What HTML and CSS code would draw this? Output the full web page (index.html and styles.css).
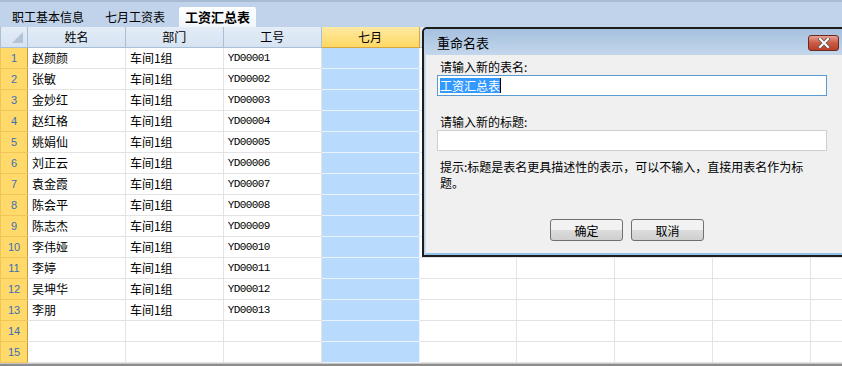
FILE: index.html
```html
<!DOCTYPE html>
<html lang="zh-CN">
<head>
    <meta charset="UTF-8">
    <title>工资汇总表</title>
    <link rel="stylesheet" href="styles.css">
</head>
<body>

<div class="tabbar">
    <span class="tab">职工基本信息</span>
    <span class="tab">七月工资表</span>
    <span class="tab active">工资汇总表</span>
</div>

<table class="sheet">
    <tr class="head">
        <th class="corner"><span class="tri"></span></th>
        <th>姓名</th><th>部门</th><th>工号</th><th class="sel-head">七月</th>
        <th></th><th></th><th></th><th></th><th></th>
    </tr>
    <tr><th>1</th><td>赵颜颜</td><td>车间1组</td><td class="id">YD00001</td><td class="sel"></td><td></td><td></td><td></td><td></td><td></td></tr>
    <tr><th>2</th><td>张敏</td><td>车间1组</td><td class="id">YD00002</td><td class="sel"></td><td></td><td></td><td></td><td></td><td></td></tr>
    <tr><th>3</th><td>金妙红</td><td>车间1组</td><td class="id">YD00003</td><td class="sel"></td><td></td><td></td><td></td><td></td><td></td></tr>
    <tr><th>4</th><td>赵红格</td><td>车间1组</td><td class="id">YD00004</td><td class="sel"></td><td></td><td></td><td></td><td></td><td></td></tr>
    <tr><th>5</th><td>姚娟仙</td><td>车间1组</td><td class="id">YD00005</td><td class="sel"></td><td></td><td></td><td></td><td></td><td></td></tr>
    <tr><th>6</th><td>刘正云</td><td>车间1组</td><td class="id">YD00006</td><td class="sel"></td><td></td><td></td><td></td><td></td><td></td></tr>
    <tr><th>7</th><td>袁金霞</td><td>车间1组</td><td class="id">YD00007</td><td class="sel"></td><td></td><td></td><td></td><td></td><td></td></tr>
    <tr><th>8</th><td>陈会平</td><td>车间1组</td><td class="id">YD00008</td><td class="sel"></td><td></td><td></td><td></td><td></td><td></td></tr>
    <tr><th>9</th><td>陈志杰</td><td>车间1组</td><td class="id">YD00009</td><td class="sel"></td><td></td><td></td><td></td><td></td><td></td></tr>
    <tr><th>10</th><td>李伟娅</td><td>车间1组</td><td class="id">YD00010</td><td class="sel"></td><td></td><td></td><td></td><td></td><td></td></tr>
    <tr><th>11</th><td>李婷</td><td>车间1组</td><td class="id">YD00011</td><td class="sel"></td><td></td><td></td><td></td><td></td><td></td></tr>
    <tr><th>12</th><td>吴坤华</td><td>车间1组</td><td class="id">YD00012</td><td class="sel"></td><td></td><td></td><td></td><td></td><td></td></tr>
    <tr><th>13</th><td>李朋</td><td>车间1组</td><td class="id">YD00013</td><td class="sel"></td><td></td><td></td><td></td><td></td><td></td></tr>
    <tr><th>14</th><td></td><td></td><td></td><td class="sel"></td><td></td><td></td><td></td><td></td><td></td></tr>
    <tr><th>15</th><td></td><td></td><td></td><td class="sel"></td><td></td><td></td><td></td><td></td><td></td></tr>
</table>

<div class="bottom-line"></div>

<div class="dialog">
    <div class="dialog-title">
        <span>重命名表</span>
        <span class="close-btn">
            <svg width="16" height="10" viewBox="0 0 16 10">
                <path d="M4 1 L12 9 M12 1 L4 9" stroke="#5a5a5a" stroke-width="3.6" stroke-linecap="square"/>
                <path d="M4 1 L12 9 M12 1 L4 9" stroke="#ffffff" stroke-width="2" stroke-linecap="square"/>
            </svg>
        </span>
    </div>
    <div class="dialog-body">
        <label>请输入新的表名:</label>
        <div class="field focus"><span class="picked">工资汇总表</span><span class="caret"></span></div>
        <label class="second">请输入新的标题:</label>
        <div class="field"></div>
        <p class="hint">提示:标题是表名更具描述性的表示，可以不输入，直接用表名作为标题。</p>
        <div class="buttons">
            <button>确定</button>
            <button>取消</button>
        </div>
    </div>
</div>

</body>
</html>
```

FILE: styles.css
```css
* {
    box-sizing: border-box;
    font-family: "Noto Sans CJK SC", "Liberation Sans", sans-serif;
}

body {
    margin: 0;
    width: 842px;
    height: 366px;
    overflow: hidden;
    position: relative;
    background: #ffffff;
    font-size: 12px;
    color: #000;
}

.tabbar {
    height: 27px;
    background: #c1d3ea;
    border-top: 2px solid #a9bbd2;
    display: flex;
    align-items: flex-end;
    padding-left: 5px;
}

.tab {
    height: 20px;
    line-height: 20px;
    padding: 0 7px;
    margin-right: 7px;
    font-size: 12px;
}

.tab.active {
    background: linear-gradient(#ffffff, #f1f5fa);
    font-weight: bold;
    font-size: 13px;
    border-radius: 2px 2px 0 0;
    padding: 0 6px;
}

.sheet {
    border-collapse: collapse;
    table-layout: fixed;
    width: 909px;
}

.sheet th, .sheet td {
    height: 21px;
    padding: 0;
}

.sheet td {
    width: 98px;
    border: 1px solid #e3e3e3;
    padding-left: 4px;
    font-size: 12px;
    line-height: 19px;
    white-space: nowrap;
    overflow: hidden;
}

.sheet td.id {
    font-family: "Liberation Mono", monospace;
    font-size: 11px;
    letter-spacing: -0.6px;
    padding-top: 1px;
}

.sheet td.sel {
    background: #b8dbfd;
    border-color: #e9f3fd;
}

.sheet tr > th:first-child {
    width: 27px;
    background: #ffd96a;
    border: 1px solid #f0c55a;
    border-right: 1px solid #c99a37;
    color: #3a6fb7;
    font-weight: normal;
    font-size: 11px;
    font-family: "Liberation Sans", sans-serif;
}

.sheet tr.head th {
    height: 20px;
    background: linear-gradient(#e3ecf7, #d6e3f2);
    border: 1px solid #a9bfd6;
    border-top: none;
    font-weight: normal;
    font-size: 12px;
    line-height: 18px;
}

.sheet tr.head th.corner {
    background: linear-gradient(#e3ecf7, #d6e3f2);
    border-right: 1px solid #a9bfd6;
    position: relative;
}

.tri {
    position: absolute;
    right: 4px;
    bottom: 4px;
    width: 0;
    height: 0;
    border-left: 11px solid transparent;
    border-bottom: 11px solid #b4c3d6;
}

.sheet tr.head th.sel-head {
    background: linear-gradient(#fde9a3, #ffd862);
    border: 1px solid #d8a63e;
    border-top: none;
}

.bottom-line {
    height: 4px;
    background: #8c8c8c;
    border-top: 1px solid #c8c8c8;
}

.dialog {
    position: absolute;
    left: 422px;
    top: 27px;
    width: 430px;
    height: 230px;
    border: 2px solid #1d1d1d;
    border-radius: 5px 0 0 0;
    background: #b9cfe8;
    display: flex;
    flex-direction: column;
}

.dialog-title {
    height: 26px;
    background: linear-gradient(#a6c0df, #c3d7ec);
    display: flex;
    align-items: center;
    justify-content: space-between;
    padding: 0 11px 0 13px;
    font-size: 13px;
    border-radius: 4px 0 0 0;
}

.close-btn {
    width: 31px;
    height: 16px;
    margin-top: 2px;
    border: 1px solid #6b2a22;
    border-radius: 3px;
    background: linear-gradient(#e7a193, #cd5a43 50%, #b8402b);
    display: flex;
    align-items: center;
    justify-content: center;
}

.dialog-body {
    flex: 1;
    background: #f0f0f0;
    margin: 0 0 0 1px;
    border-bottom: 2px solid #8fc4e6;
    border-left: 1px solid #c9dcee;
    padding: 4px 23px 0 11px;
    display: flex;
    flex-direction: column;
}

.dialog-body label {
    font-size: 12px;
    height: 16px;
    line-height: 16px;
    margin-left: 3px;
}

.dialog-body label.second {
    margin-top: 18px;
}

.field {
    height: 21px;
    background: #fff;
    border: 1px solid #cfcfcf;
    display: flex;
    align-items: center;
    padding-left: 2px;
}

.field.focus {
    border-color: #5b9ad0;
}

.picked {
    background: #3399ff;
    color: #fff;
    font-size: 12px;
    line-height: 15px;
}

.caret {
    width: 1px;
    height: 15px;
    background: #000;
}

.hint {
    margin: 8px 0 0 3px;
    font-size: 12px;
    line-height: 16px;
    width: 374px;
}

.buttons {
    display: flex;
    gap: 8px;
    margin-top: 28px;
    padding-left: 113px;
}

.buttons button {
    width: 73px;
    height: 22px;
    border: 1px solid #707070;
    border-radius: 3px;
    background: linear-gradient(#f2f2f2 50%, #dcdcdc 50%, #cfcfcf);
    font-size: 12px;
    padding: 0;
}
```
